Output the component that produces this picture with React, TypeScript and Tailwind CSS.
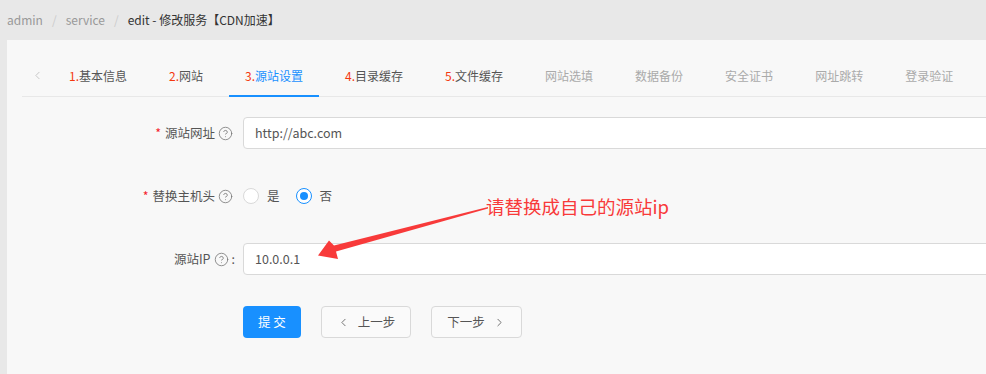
import { ChevronLeft, ChevronRight, CircleHelp } from "lucide-react";

const tabs = [
  { num: "1.", label: "基本信息", state: "done" },
  { num: "2.", label: "网站", state: "done" },
  { num: "3.", label: "源站设置", state: "active" },
  { num: "4.", label: "目录缓存", state: "done" },
  { num: "5.", label: "文件缓存", state: "done" },
  { num: "", label: "网站选填", state: "todo" },
  { num: "", label: "数据备份", state: "todo" },
  { num: "", label: "安全证书", state: "todo" },
  { num: "", label: "网址跳转", state: "todo" },
  { num: "", label: "登录验证", state: "todo" },
];

function Help() {
  return <CircleHelp size={15} strokeWidth={1.3} className="ml-[3px] text-[#777]" />;
}

function FormLabel({ text, required, colon }: { text: string; required?: boolean; colon?: boolean }) {
  return (
    <div className="flex w-[221px] shrink-0 items-center justify-end pr-[8px] text-[12.5px] text-[#555]">
      {required ? <span className="mr-1 text-[#f5222d]">*</span> : null}
      <span>{text}</span>
      <Help />
      {colon ? <span className="ml-[3px]">:</span> : <span className="w-[2px]" />}
    </div>
  );
}

function Radio({ checked, label }: { checked?: boolean; label: string }) {
  return (
    <label className="mr-2 flex items-center">
      <span
        className={[
          "flex h-4 w-4 items-center justify-center rounded-full border bg-white",
          checked ? "border-[#1890ff]" : "border-[#d9d9d9]",
        ].join(" ")}
      >
        {checked ? <span className="h-2 w-2 rounded-full bg-[#1890ff]" /> : null}
      </span>
      <span className="px-2 text-[12.5px] text-[#555]">{label}</span>
    </label>
  );
}

export default function App() {
  return (
    <div className="relative h-[374px] w-[986px] overflow-hidden bg-[#e8e8e8] font-['Noto_Sans_CJK_SC',sans-serif] leading-[20px]">
      <div className="flex h-10 items-center px-[7px] text-[12px]">
        <span className="text-[#999]">admin</span>
        <span className="px-[9px] text-[#ccc]">/</span>
        <span className="text-[#999]">service</span>
        <span className="px-[9px] text-[#ccc]">/</span>
        <span className="text-[#333]">edit - 修改服务【CDN加速】</span>
      </div>

      <div className="ml-[7px] h-[334px] w-[1100px] bg-[#f8f8f8] pl-[15px] pt-[15px]">
        <div className="flex h-[42px] items-stretch border-b border-[#e8e8e8]">
          <div className="flex w-[31px] items-center justify-center text-[#bbb]">
            <ChevronLeft size={13} strokeWidth={1.5} />
          </div>
          <div className="flex gap-[10px]">
            {tabs.map((tab) => {
              const textClass =
                tab.state === "active" ? "text-[#1890ff]" : tab.state === "done" ? "text-[#555]" : "text-[#aaa]";
              return (
                <div key={tab.label} className={`relative flex items-center px-4 text-[12px] ${textClass}`}>
                  {tab.num ? <span className="text-[#f4380f]">{tab.num}</span> : null}
                  {tab.label}
                  {tab.state === "active" ? (
                    <span className="absolute bottom-[-1px] left-0 h-[2px] w-full bg-[#1890ff]" />
                  ) : null}
                </div>
              );
            })}
          </div>
        </div>

        <div className="pt-[20px]">
          <div className="mb-[31px] flex h-8 items-center">
            <FormLabel text="源站网址" required />
            <div className="flex h-8 flex-1 items-center rounded border border-[#d9d9d9] bg-white px-[11px] text-[12.5px] text-[#555]">
              http://abc.com
            </div>
          </div>

          <div className="mb-[31px] flex h-8 items-center">
            <FormLabel text="替换主机头" required />
            <div className="flex items-center">
              <Radio label="是" />
              <Radio label="否" checked />
            </div>
          </div>

          <div className="mb-[31px] flex h-8 items-center">
            <FormLabel text="源站IP" colon />
            <div className="flex h-8 flex-1 items-center rounded border border-[#d9d9d9] bg-white px-[11px] text-[12.5px] text-[#555]">
              10.0.0.1
            </div>
          </div>

          <div className="flex h-8 items-center gap-5 pl-[221px]">
            <button className="h-8 rounded bg-[#1890ff] px-[15px] text-[12.5px] text-white">提 交</button>
            <button className="flex h-8 items-center gap-2 rounded border border-[#d9d9d9] bg-[#fafafa] px-[15px] text-[12.5px] text-[#555]">
              <ChevronLeft size={13} strokeWidth={1.5} />
              上一步
            </button>
            <button className="flex h-8 items-center gap-2 rounded border border-[#d9d9d9] bg-[#fafafa] px-[15px] text-[12.5px] text-[#555]">
              下一步
              <ChevronRight size={13} strokeWidth={1.5} />
            </button>
          </div>
        </div>
      </div>

      <svg className="pointer-events-none absolute left-0 top-0" width="986" height="374">
        <polygon
          points="488,207 334,245.5 329,240.5 318,255.5 338,259 336,251.5 488,208.6"
          fill="#f83a3a"
        />
      </svg>
      <div className="pointer-events-none absolute left-[486px] top-[193px] text-[18.5px] leading-[26px] text-[#f83a3a]">
        请替换成自己的源站ip
      </div>
    </div>
  );
}
